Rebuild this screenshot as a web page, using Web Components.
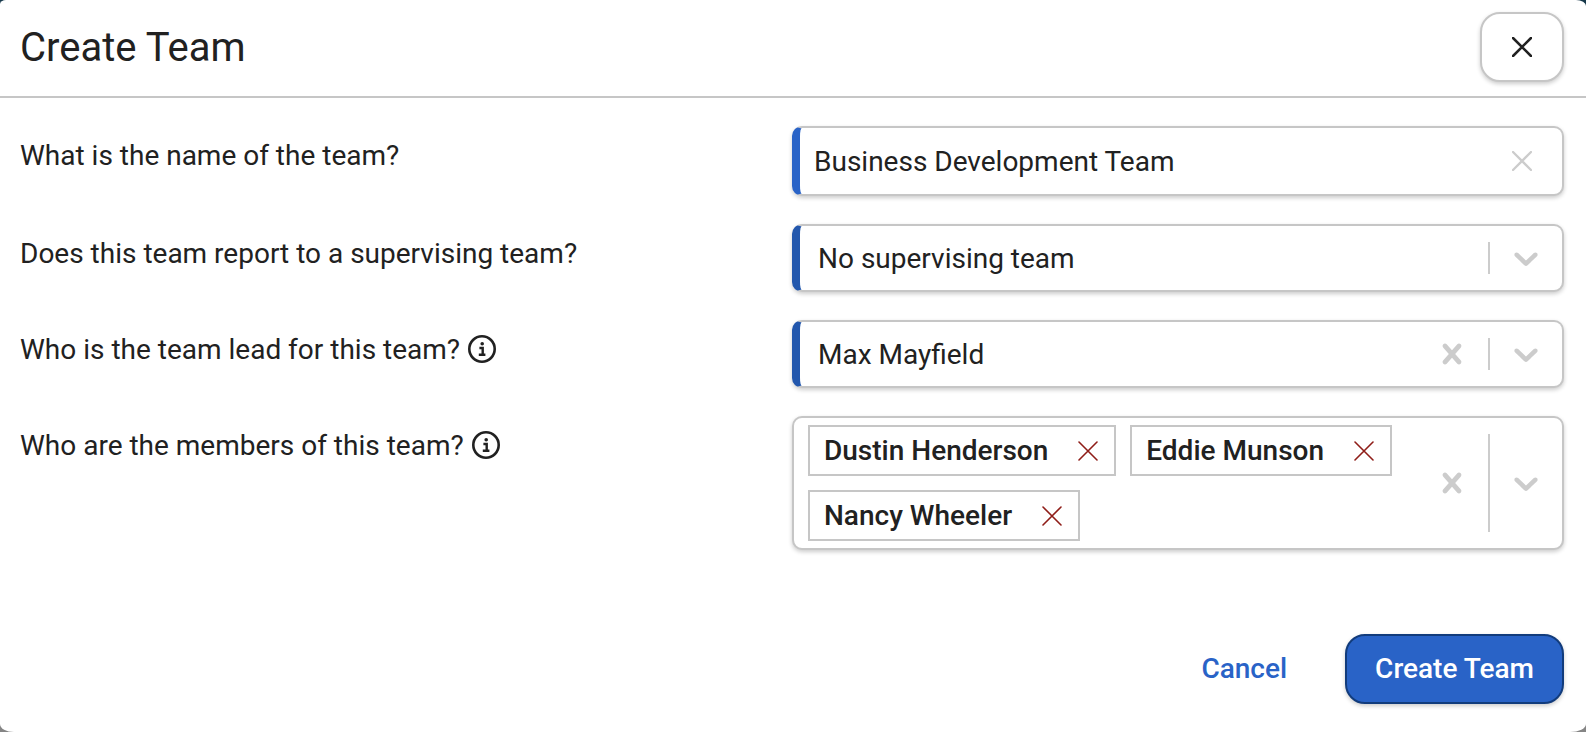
<!DOCTYPE html>
<html lang="en">
<head>
<meta charset="utf-8">
<meta name="viewport" content="width=device-width, initial-scale=1">
<title>Create Team</title>
<style>
  html, body { margin: 0; min-height: 100%; }
  body {
    --text: #212121;
    --line: #c6c6c6;
    --icon: #cccccc;
    --blue: #2963c7;
    --blue-strong: #2257ad;
    --blue-border: #123c7c;
    --danger: #8f1d18;
    --shadow: 0 2px 4px rgba(0, 0, 0, .2);
    background: linear-gradient(#16384a 0 50%, #858585 50%);
    color: var(--text);
    font: 400 28px/36px Roboto, sans-serif;
  }
</style>
</head>
<body>
<team-dialog heading="Create Team">
  <text-field label="What is the name of the team?" value="Business Development Team"></text-field>
  <select-field label="Does this team report to a supervising team?" value="No supervising team"></select-field>
  <select-field label="Who is the team lead for this team?" value="Max Mayfield" info clearable></select-field>
  <members-field label="Who are the members of this team?" info>
    <member-chip>Dustin Henderson</member-chip>
    <member-chip>Eddie Munson</member-chip>
    <member-chip>Nancy Wheeler</member-chip>
  </members-field>
  <action-button slot="actions" variant="link">Cancel</action-button>
  <action-button slot="actions" variant="primary">Create Team</action-button>
</team-dialog>

<script>
const cross = (size, width) => `<svg width="${size}" height="${size}" viewBox="0 0 20 20" fill="none" stroke="currentColor" stroke-width="${width}" stroke-linecap="round" aria-hidden="true"><path d="M1 1 19 19M19 1 1 19"/></svg>`;
const clearIcon = `<svg width="40" height="40" viewBox="0 0 20 20" fill="currentColor" aria-hidden="true"><path d="M14.348 14.849c-0.469 0.469-1.229 0.469-1.697 0l-2.651-3.030-2.651 3.029c-0.469 0.469-1.229 0.469-1.697 0-0.469-0.469-0.469-1.229 0-1.697l2.758-3.15-2.759-3.152c-0.469-0.469-0.469-1.228 0-1.697s1.228-0.469 1.697 0l2.652 3.031 2.651-3.031c0.469-0.469 1.228-0.469 1.697 0s0.469 1.229 0 1.697l-2.758 3.152 2.758 3.15c0.469 0.469 0.469 1.229 0 1.698z"/></svg>`;
const chevronIcon = `<svg width="40" height="40" viewBox="0 0 20 20" fill="currentColor" aria-hidden="true"><path d="M4.516 7.548c0.436-0.446 1.043-0.481 1.576 0l3.908 3.747 3.908-3.747c0.533-0.481 1.141-0.446 1.574 0 0.436 0.445 0.408 1.197 0 1.615-0.406 0.418-4.695 4.502-4.695 4.502-0.217 0.223-0.502 0.335-0.787 0.335s-0.57-0.112-0.789-0.335c0 0-4.287-4.084-4.695-4.502s-0.436-1.17 0-1.615z"/></svg>`;
const infoIcon = `<svg width="28" height="28" viewBox="0 0 28 28" aria-hidden="true"><circle cx="14" cy="14" r="12.7" fill="none" stroke="currentColor" stroke-width="2.6"/><circle cx="14.2" cy="8.8" r="1.8" fill="currentColor"/><path d="M11.4 13H14.7V19.6M10.8 19.8H17.4" fill="none" stroke="currentColor" stroke-width="2.4"/></svg>`;

const base = `
  * { box-sizing: border-box; }
  button, input, select { font: inherit; color: inherit; }
  button { display: grid; place-items: center; margin: 0; padding: 0; border: 0; background: none; cursor: pointer; }
  svg { display: block; }`;

class TeamDialog extends HTMLElement {
  connectedCallback() {
    this.attachShadow({ mode: 'open' }).innerHTML = `<style>${base}
      :host { display: flex; flex-direction: column; min-height: 100vh; box-sizing: border-box; background: #fff; border-radius: 6px 10px 16px 14px / 4px 6px 8px 8px; overflow: hidden; }
      header { display: flex; align-items: center; justify-content: space-between; padding: 12px 22px 14px 20px; border-bottom: 2px solid var(--line); }
      h1 { margin: 0; padding-top: 2px; font-size: 40px; line-height: 68px; font-weight: 400; }
      .close { width: 84px; height: 70px; border: 2px solid var(--line); border-radius: 20px; box-shadow: var(--shadow); background: #fff; }
      main { display: grid; gap: 28px; padding: 28px 22px 28px 20px; }
      footer { display: flex; justify-content: flex-end; gap: 28px; margin-top: auto; padding: 28px 22px 28px 20px; }
    </style>
    <header><h1></h1><button class="close" type="button" aria-label="Close">${cross(20, 2.5)}</button></header>
    <main><slot></slot></main>
    <footer><slot name="actions"></slot></footer>`;
    this.shadowRoot.querySelector('h1').textContent = this.getAttribute('heading');
  }
}

class ActionButton extends HTMLElement {
  connectedCallback() {
    this.attachShadow({ mode: 'open' }).innerHTML = `<style>${base}
      :host { display: block; }
      button { height: 70px; padding: 0 28px; border: 2px solid transparent; border-radius: 20px; font-weight: 500; color: var(--blue); }
      :host([variant="primary"]) button { background: var(--blue); border-color: var(--blue-border); color: #fff; box-shadow: var(--shadow); }
    </style><button type="button"><slot></slot></button>`;
  }
}

class FormField extends HTMLElement {
  connectedCallback() {
    this.attachShadow({ mode: 'open' }).innerHTML = `<style>${base}
      :host { display: grid; grid-template-columns: 1fr 1fr; align-items: start; }
      .question { display: flex; align-items: center; gap: 8px; height: 60px; }
      .question button { padding-bottom: 2px; }
      .control { display: flex; min-width: 0; min-height: 68px; background: #fff; border: 2px solid var(--line); border-radius: 10px; box-shadow: var(--shadow); }
      .marked { border-left: 8px solid var(--blue-strong); }
      .tall { min-height: 70px; border-left-color: var(--blue); }
      input, select { flex: 1; min-width: 0; margin: 0; border: 0; outline: 0; background: none; appearance: none; }
      input { padding: 2px 14px 0; }
      select { padding: 2px 18px 0; }
      .icon { display: grid; place-items: center; width: 72px; color: var(--icon); }
      .small { width: 80px; }
      .bar { width: 2px; margin: 16px 0; background: var(--icon); }
      .chips { flex: 1; display: flex; flex-wrap: wrap; gap: 14px; padding: 7px 14px; }
    </style>
    <div class="question"><label id="question" for="control"></label>${this.hasAttribute('info') ? `<button type="button" aria-label="More information">${infoIcon}</button>` : ''}</div>
    ${this.control()}`;
    this.shadowRoot.querySelector('label').textContent = this.getAttribute('label');
  }
}

class TextField extends FormField {
  control() {
    return `<div class="control marked tall"><input id="control" type="text" value="${this.getAttribute('value')}"><button class="icon small" type="button" aria-label="Clear">${cross(20, 2.3)}</button></div>`;
  }
}

class SelectField extends FormField {
  control() {
    const clear = this.hasAttribute('clearable') ? `<button class="icon" type="button" aria-label="Clear">${clearIcon}</button>` : '';
    return `<div class="control marked"><select id="control"><option>${this.getAttribute('value')}</option></select>${clear}<span class="bar"></span><span class="icon">${chevronIcon}</span></div>`;
  }
}

class MembersField extends FormField {
  control() {
    return `<div class="control" id="control" role="group" aria-labelledby="question"><div class="chips"><slot></slot></div><button class="icon" type="button" aria-label="Clear all">${clearIcon}</button><span class="bar"></span><button class="icon" type="button" aria-label="Show people">${chevronIcon}</button></div>`;
  }
}

class MemberChip extends HTMLElement {
  connectedCallback() {
    this.attachShadow({ mode: 'open' }).innerHTML = `<style>${base}
      :host { display: flex; align-items: center; gap: 14px; box-sizing: border-box; height: 51px; padding-left: 14px; border: 2px solid var(--line); font-weight: 500; }
      button { width: 52px; height: 47px; color: var(--danger); }
    </style><slot></slot><button type="button" aria-label="Remove">${cross(20, 1.6)}</button>`;
  }
}

customElements.define('member-chip', MemberChip);
customElements.define('action-button', ActionButton);
customElements.define('text-field', TextField);
customElements.define('select-field', SelectField);
customElements.define('members-field', MembersField);
customElements.define('team-dialog', TeamDialog);
</script>
</body>
</html>
